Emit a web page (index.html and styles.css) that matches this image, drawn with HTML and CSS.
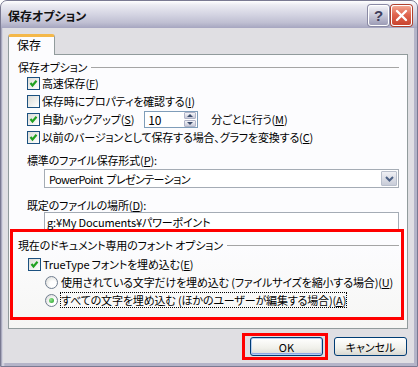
FILE: index.html
```html
<!DOCTYPE html>
<html lang="ja">
  <head>
    <meta charset="UTF-8" />
    <title>保存オプション</title>
    <link rel="stylesheet" href="styles.css">
  </head>
  <body>
    <div class="window">
      <div class="titlebar">
        <span class="title">保存オプション</span>
        <div class="caption">
          <span class="cbtn help">?</span>
          <span class="cbtn close">
            <svg width="13" height="13" viewBox="0 0 13 13">
              <path d="M2 2 L11 11 M11 2 L2 11" stroke="#fff" stroke-width="2.4" stroke-linecap="round" />
            </svg>
          </span>
        </div>
      </div>

      <div class="client">
        <div class="tabs">
          <div class="tab valgt">保存</div>
        </div>

        <div class="panel">
          <div class="grouphead">
            <span>保存オプション</span>
            <span class="line"></span>
          </div>

          <div class="row ind1">
            <span class="chk on"></span>高速保存(<u>F</u>)
          </div>
          <div class="row ind1">
            <span class="chk"></span>保存時にプロパティを確認する(<u>I</u>)
          </div>
          <div class="row ind1">
            <span class="chk on"></span>自動バックアップ(<u>S</u>)
            <span class="spin">
              <span class="spinval">10</span>
              <span class="spinbtns">
                <span class="sb up"></span>
                <span class="sb down"></span>
              </span>
            </span>
            <span class="after">分ごとに行う(<u>M</u>)</span>
          </div>
          <div class="row ind1">
            <span class="chk on"></span>以前のバージョンとして保存する場合、グラフを変換する(<u>C</u>)
          </div>

          <div class="label ind1 lbl-fmt">標準のファイル保存形式(<u>P</u>):</div>
          <div class="select">
            <span class="seltext">PowerPoint&nbsp; プレゼンテーション</span>
            <span class="dropbtn">
              <svg width="9" height="6" viewBox="0 0 9 6">
                <path d="M1 1 L4.5 4.5 L8 1" fill="none" stroke="#4d6185" stroke-width="2" />
              </svg>
            </span>
          </div>

          <div class="label ind1 lbl-loc">既定のファイルの場所(<u>D</u>):</div>
          <div class="textbox">g:¥My Documents¥パワーポイント</div>

          <div class="redbox">
            <div class="grouphead inner">
              <span>現在のドキュメント専用のフォント オプション</span>
              <span class="line"></span>
            </div>
            <div class="row ind2">
              <span class="chk on"></span>TrueType フォントを埋め込む(<u>E</u>)
            </div>
            <div class="row ind3">
              <span class="radio"></span>使用されている文字だけを埋め込む (ファイルサイズを縮小する場合)(<u>U</u>)
            </div>
            <div class="row ind3">
              <span class="radio on"></span><span class="focus">すべての文字を埋め込む (ほかのユーザーが編集する場合)(<u>A</u>)</span>
            </div>
          </div>
        </div>

        <div class="buttons">
          <div class="redmark">
            <button class="btn default">OK</button>
          </div>
          <button class="btn">キャンセル</button>
        </div>
      </div>
    </div>
  </body>
</html>
```

FILE: styles.css
```css
body {
  margin: 0;
  width: 418px;
  height: 367px;
  overflow: hidden;
  background-color: #ffffff;
  font-family: "Noto Sans CJK JP", "Liberation Sans", sans-serif;
  font-size: 11px;
  letter-spacing: -0.15px;
  font-feature-settings: "palt";
  color: #000000;
}

.window {
  width: 418px;
  height: 367px;
  box-sizing: border-box;
  display: flex;
  flex-direction: column;
  background: linear-gradient(to right, #8e8ea6, #c6c6d6 1px, #dcdce6 2px, #b4b4c8 4px);
  border-radius: 7px 7px 0 0;
  border: 1px solid #7a7a92;
  padding: 0 3px 3px 2px;
}

/* titel linjen */
.titlebar {
  height: 27px;
  flex: none;
  display: flex;
  align-items: center;
  justify-content: space-between;
  margin: 0 -3px 0 -2px;
  padding: 0 5px 0 7px;
  border-radius: 6px 6px 0 0;
  background: linear-gradient(#ffffff 0%, #ebebf2 15%, #d4d4e2 50%, #bfbfd2 80%, #a6a6c0 100%);
}

.title {
  font-weight: bold;
  font-size: 12px;
  letter-spacing: 0;
  color: #111111;
  margin-top: 2px;
}

.caption {
  display: flex;
  gap: 2px;
  margin-top: 2px;
}

.cbtn {
  width: 21px;
  height: 21px;
  box-sizing: border-box;
  border-radius: 3px;
  border: 1px solid #ffffff;
  display: flex;
  align-items: center;
  justify-content: center;
}

.help {
  background: linear-gradient(#f2f2f7, #c8c8d8 50%, #9c9cb6);
  color: #3e3e5c;
  font-family: "Liberation Sans", sans-serif;
  font-weight: bold;
  font-size: 15px;
  box-shadow: 0 0 0 1px #8a8aa4;
}

.close {
  background: linear-gradient(#f3a691, #e06650 45%, #c9432e);
  box-shadow: 0 0 0 1px #b0412d;
}

/* klient omraade */
.client {
  flex: 1;
  background-color: #e0dfe3;
  padding: 6px 6px 0 5px;
  display: flex;
  flex-direction: column;
}

.tabs {
  display: flex;
  height: 20px;
  position: relative;
  z-index: 1;
}

.tab {
  width: 47px;
  height: 21px;
  box-sizing: border-box;
  border: 1px solid #919b9c;
  border-top: 3px solid #f4b84a;
  border-bottom: none;
  border-radius: 3px 3px 0 0;
  background-color: #fcfcfe;
  padding-left: 8px;
  line-height: 16px;
  font-size: 12px;
  letter-spacing: 0;
}

.panel {
  height: 275px;
  box-sizing: border-box;
  border: 1px solid #919b9c;
  background: linear-gradient(#fcfcfe 70%, #f6f6f4);
  padding-top: 5px;
}

.grouphead {
  display: flex;
  align-items: center;
  height: 14px;
  line-height: 14px;
  padding-left: 9px;
  margin-right: 8px;
}

.grouphead .line {
  flex: 1;
  height: 1px;
  background-color: #a5a5a5;
  margin-left: 4px;
  margin-top: 1px;
}

.grouphead.inner {
  padding-left: 5px;
  margin-right: 2px;
  margin-top: 6px;
}

.row {
  display: flex;
  align-items: center;
  height: 18px;
  white-space: nowrap;
}

.panel > .row:first-of-type {
  margin-top: 7px;
}

.ind1 {
  padding-left: 18px;
}

.ind2 {
  padding-left: 15px;
  margin-top: 3px;
}

.ind3 {
  padding-left: 32px;
}

.chk {
  width: 13px;
  height: 13px;
  box-sizing: border-box;
  border: 1px solid #1c5180;
  background: linear-gradient(135deg, #dcdcd7, #ffffff);
  margin-right: 2px;
  flex: none;
}

.chk.on {
  background:
    url("data:image/svg+xml;utf8,<svg xmlns='http://www.w3.org/2000/svg' width='11' height='11'><path d='M2.5 5 L4.5 7.5 L8.5 2.8' fill='none' stroke='%2321a121' stroke-width='2.2'/></svg>") no-repeat center,
    linear-gradient(135deg, #dcdcd7, #ffffff);
}

.radio {
  width: 13px;
  height: 13px;
  box-sizing: border-box;
  border-radius: 50%;
  border: 1px solid #6f7d8f;
  background: radial-gradient(circle at 65% 65%, #ffffff 30%, #d4d4d0);
  margin-right: 3px;
  flex: none;
  display: flex;
  align-items: center;
  justify-content: center;
}

.radio.on::after {
  content: "";
  width: 5px;
  height: 5px;
  border-radius: 50%;
  background: radial-gradient(circle at 35% 35%, #8ee08e, #21a121);
}

.focus {
  outline: 1px dotted #000000;
  outline-offset: 0;
  line-height: 14px;
}

.spin {
  display: flex;
  align-items: center;
  width: 54px;
  height: 17px;
  box-sizing: border-box;
  border: 1px solid #7f9db9;
  background-color: #ffffff;
  margin-left: 10px;
  padding: 0 1px 0 3px;
  justify-content: space-between;
  font-size: 12px;
}

.spinbtns {
  display: flex;
  flex-direction: column;
  gap: 1px;
}

.sb {
  width: 10px;
  height: 5px;
  border-radius: 1px;
  background: linear-gradient(#f4f4f8, #c8cad8);
  border: 1px solid #b0b4c8;
  box-sizing: content-box;
  position: relative;
}

.sb::after {
  content: "";
  position: absolute;
  left: 2px;
  border-left: 3px solid transparent;
  border-right: 3px solid transparent;
}

.sb.up::after {
  top: 1px;
  border-bottom: 3px solid #3c4c6c;
}

.sb.down::after {
  top: 1px;
  border-top: 3px solid #3c4c6c;
}

.after {
  margin-left: 13px;
}

.label {
  height: 14px;
  line-height: 14px;
}

.lbl-fmt {
  margin-top: 7px;
}

.lbl-loc {
  margin-top: 10px;
}

.select {
  display: flex;
  align-items: center;
  justify-content: space-between;
  height: 19px;
  box-sizing: border-box;
  margin: 2px 8px 0 35px;
  border: 1px solid #a5acb5;
  background-color: #ffffff;
  padding: 0 1px 0 4px;
  white-space: nowrap;
}

.seltext {
  letter-spacing: -0.6px;
}

.dropbtn {
  width: 16px;
  height: 15px;
  box-sizing: border-box;
  border: 1px solid #b9bfcc;
  border-radius: 1px;
  background: linear-gradient(#f0f0f4, #c8ccd8);
  display: flex;
  align-items: center;
  justify-content: center;
}

.textbox {
  height: 20px;
  box-sizing: border-box;
  margin: 0 8px 0 35px;
  border: 1px solid #a5acb5;
  background-color: #ffffff;
  padding: 1px 0 0 2px;
  line-height: 16px;
  white-space: nowrap;
}

/* roed markering */
.redbox {
  margin: -3px 3px 0 1px;
  height: 91px;
  box-sizing: border-box;
  border: 3px solid #ff0000;
}

.buttons {
  display: flex;
  justify-content: flex-end;
  align-items: center;
  gap: 6px;
  margin-top: 8px;
  padding-right: 1px;
}

.redmark {
  border: 3px solid #ff0000;
  padding: 1px 2px 1px 5px;
  margin: -4px 0;
}

.btn {
  width: 73px;
  height: 19px;
  box-sizing: border-box;
  border: 1px solid #003c74;
  border-radius: 3px;
  background: linear-gradient(#ffffff, #f0f0ea 60%, #d8d8d2);
  font-family: "Noto Sans CJK JP", "Liberation Sans", sans-serif;
  font-size: 11px;
  font-feature-settings: "palt";
  line-height: 14px;
  padding: 0;
  color: #000000;
}

.btn.default {
  box-shadow: inset 0 0 0 1px #b6cff2, inset 0 -1px 0 1px #8ea7e6;
}
```
